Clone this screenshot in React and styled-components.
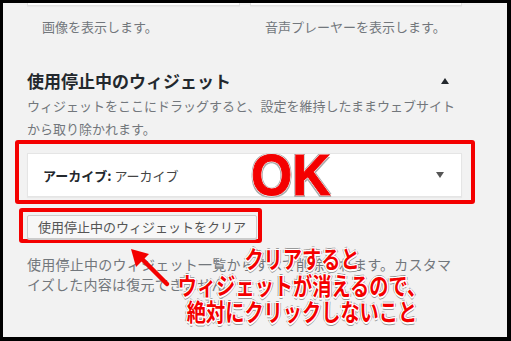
import React from "react";
import styled, { createGlobalStyle } from "styled-components";

const GlobalStyle = createGlobalStyle`
  html, body {
    margin: 0;
    padding: 0;
    background: #000;
  }
  body {
    font-family: "Noto Sans CJK JP", "Noto Sans", sans-serif;
  }
`;

const RED = "#f40000";

const Frame = styled.div`
  position: relative;
  box-sizing: border-box;
  width: 511px;
  height: 341px;
  overflow: hidden;
  border: solid #000;
  border-width: 3px 4px 4px 3px;
  background: #f2f2f2;
  padding: 0 45px 0 24px;
`;

const TwoCols = styled.div`
  display: grid;
  grid-template-columns: 213px 212px;
  column-gap: 10px;
  margin-top: ${(p) => p.$top || 0}px;
`;

const CardEdge = styled.div`
  height: 2px;
  background: #fff;
  border: 1px solid #e2e2e2;
  border-top: 0;
  box-shadow: 0 1px 1px rgba(0, 0, 0, 0.04);
`;

const WidgetDesc = styled.div`
  padding-left: 15px;
  font-size: 13px;
  line-height: 18px;
  color: #72777c;
  white-space: nowrap;
`;

const SidebarHead = styled.div`
  display: flex;
  align-items: center;
  justify-content: space-between;
  margin-top: 33px;
  height: 24px;
  padding-right: 13px;
`;

const SidebarTitle = styled.h2`
  margin: 0;
  font-size: 17px;
  line-height: 24px;
  font-weight: 700;
  color: #23282d;
`;

const Caret = styled.span`
  width: 0;
  height: 0;
  border-left: 4px solid transparent;
  border-right: 4px solid transparent;
  ${(p) =>
    p.$up
      ? `border-bottom: 6px solid ${p.$color || "#23282d"};`
      : `border-top: 6px solid ${p.$color || "#23282d"};`}
`;

const Paragraph = styled.p`
  margin: ${(p) => p.$top || 0}px 0 0;
  font-size: ${(p) => p.$size || 13}px;
  letter-spacing: ${(p) => p.$spacing || 0}px;
  line-height: ${(p) => p.$lh}px;
  color: #72777c;
  white-space: nowrap;
`;

const Highlight = styled.div`
  box-sizing: border-box;
  border: 4px solid ${RED};
  border-radius: 3px;
  margin-left: ${(p) => p.$left}px;
  margin-top: ${(p) => p.$top || 0}px;
  width: ${(p) => p.$width}px;
  padding: ${(p) => p.$pad};
`;

const WidgetBar = styled.div`
  box-sizing: border-box;
  height: 44px;
  display: flex;
  align-items: center;
  justify-content: space-between;
  padding: 0 17px 0 15px;
  background: #fff;
  border: 1px solid #e5e5e5;
  font-size: 13px;
  color: #23282d;
  box-shadow: 0 1px 1px rgba(0, 0, 0, 0.04);
`;

const WidgetName = styled.span`
  font-weight: 700;
`;

const WidgetSub = styled.span`
  font-weight: 400;
  color: #444;
`;

const ClearButton = styled.button`
  box-sizing: border-box;
  height: 24px;
  width: 230px;
  padding: 0 0 0 10px;
  text-align: left;
  font-family: inherit;
  font-size: 13px;
  line-height: 22px;
  color: #555;
  background: #f7f7f7;
  border: 1px solid #ccc;
  border-radius: 2px;
  box-shadow: 0 1px 0 #ccc;
  white-space: nowrap;
`;

const BigOk = styled.div`
  position: absolute;
  left: 248px;
  top: 140px;
  font-family: "Liberation Sans", Arial, sans-serif;
  font-weight: 700;
  font-size: 57px;
  line-height: 64px;
  color: ${RED};
  transform: scaleX(0.93);
  transform-origin: left center;
  -webkit-text-stroke: 1px ${RED};
  text-shadow: 1px 0 0 #fff, -1px 0 0 #fff, 0 1px 0 #fff, 0 -1px 0 #fff,
    1.5px 1.5px 0 #aaa, -1.5px -1.5px 0 #aaa, 1.5px -1.5px 0 #aaa,
    -1.5px 1.5px 0 #aaa;
`;

const Note = styled.div`
  position: absolute;
  left: 137px;
  top: 242px;
  width: 324px;
  text-align: center;
  font-family: "Noto Sans CJK JP", sans-serif;
  font-weight: 700;
  font-size: 24px;
  line-height: 26.5px;
  color: ${RED};
  transform: scaleX(0.8);
  white-space: nowrap;
  text-shadow: 1.5px 0 0 #fff, -1.5px 0 0 #fff, 0 1.5px 0 #fff,
    0 -1.5px 0 #fff, 1px 1px 0 #fff, -1px -1px 0 #fff, 1px -1px 0 #fff,
    -1px 1px 0 #fff, 2.5px 0 0 #999, -2.5px 0 0 #999, 0 2.5px 0 #999,
    0 -2.5px 0 #999;
`;

const ArrowSvg = styled.svg`
  position: absolute;
  left: 117px;
  top: 233px;
`;

export default function App() {
  return (
    <>
      <GlobalStyle />
      <Frame>
        <TwoCols>
          <CardEdge />
          <CardEdge />
        </TwoCols>
        <TwoCols $top={12}>
          <WidgetDesc>画像を表示します。</WidgetDesc>
          <WidgetDesc>音声プレーヤーを表示します。</WidgetDesc>
        </TwoCols>

        <SidebarHead>
          <SidebarTitle>使用停止中のウィジェット</SidebarTitle>
          <Caret $up />
        </SidebarHead>
        <Paragraph $top={2} $lh={22.5}>
          ウィジェットをここにドラッグすると、設定を維持したままウェブサイト
          <br />
          から取り除かれます。
        </Paragraph>

        <Highlight $left={-12} $width={460} $pad="9px 9px 3px 8px">
          <WidgetBar>
            <span>
              <WidgetName>アーカイブ:</WidgetName>{" "}
              <WidgetSub>アーカイブ</WidgetSub>
            </span>
            <Caret $color="#555" />
          </WidgetBar>
        </Highlight>

        <Highlight $left={-8} $top={4} $width={243} $pad="1px 1px 0 4px">
          <ClearButton type="button">使用停止中のウィジェットをクリア</ClearButton>
        </Highlight>

        <Paragraph $top={11} $lh={20} $size={14} $spacing={0.25}>
          使用停止中のウィジェット一覧からすべて削除されます。カスタマ
          <br />
          イズした内容は復元できません。
        </Paragraph>

        <BigOk>OK</BigOk>

        <ArrowSvg width="60" height="60" viewBox="0 0 60 60">
          <line
            x1="47"
            y1="48"
            x2="19"
            y2="20"
            stroke={RED}
            strokeWidth="4.5"
            strokeLinecap="round"
          />
          <polygon points="11,13 29,18 16,31" fill={RED} />
        </ArrowSvg>

        <Note>
          クリアすると
          <br />
          ウィジェットが消えるので、
          <br />
          絶対にクリックしないこと
        </Note>
      </Frame>
    </>
  );
}
